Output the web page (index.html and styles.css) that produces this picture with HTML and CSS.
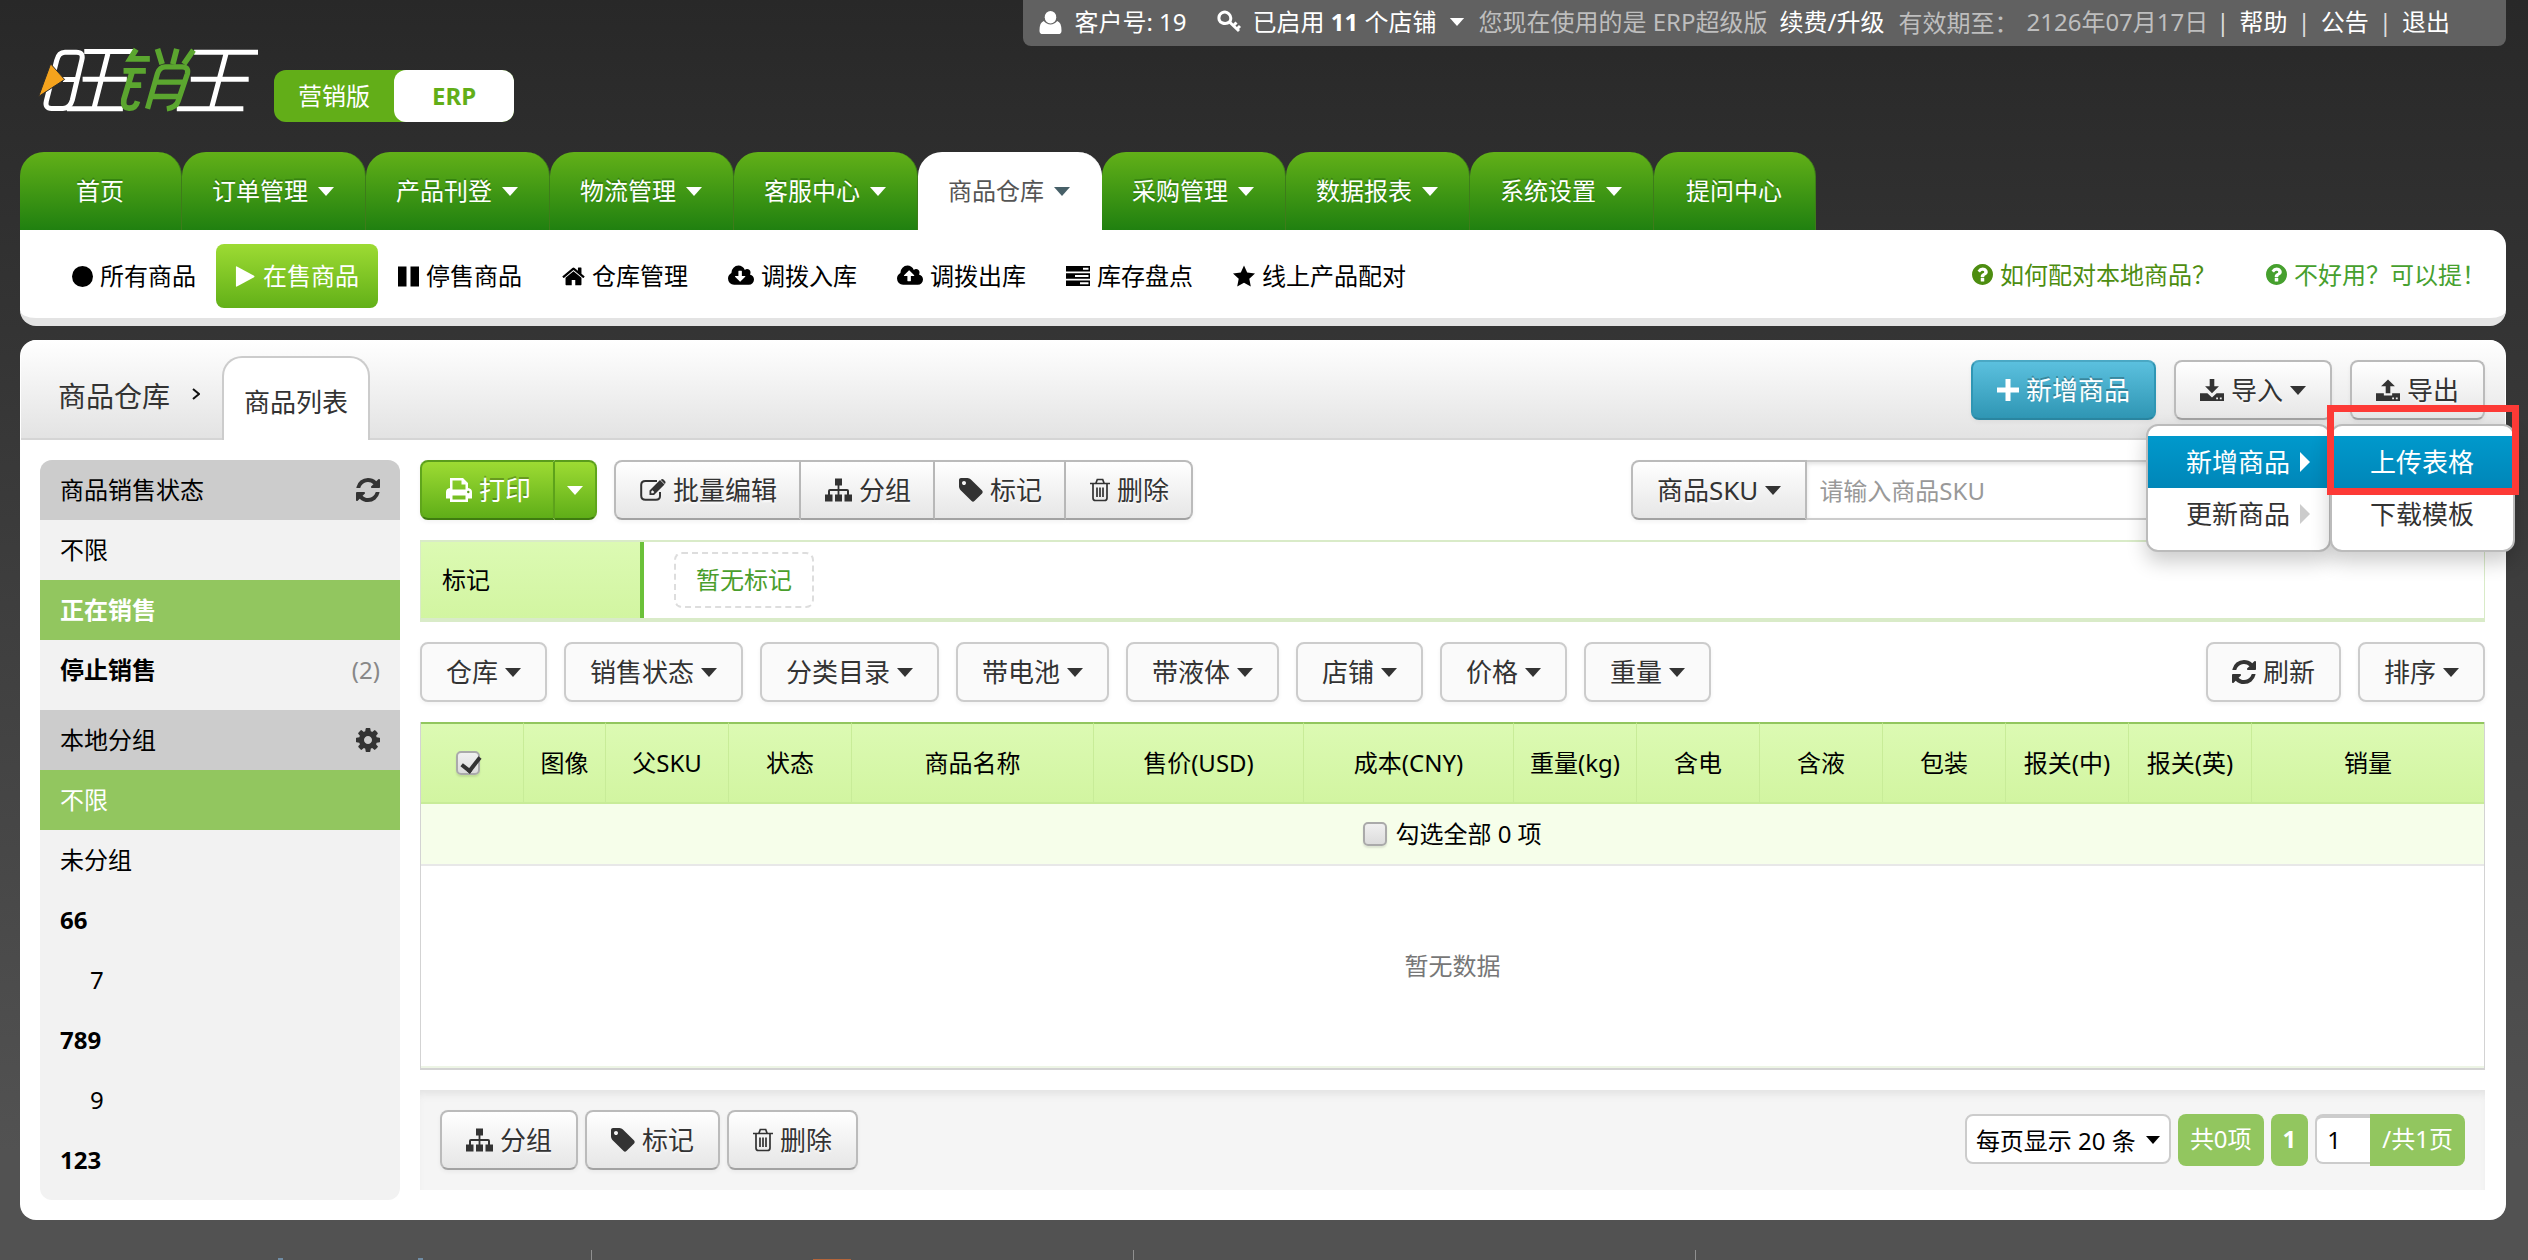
FILE: index.html
```html
<!DOCTYPE html>
<html lang="zh-CN">
<head>
<meta charset="utf-8">
<title>旺销王 - 商品列表</title>
<link rel="stylesheet" href="styles.css">
</head>
<body>
<svg class="sprite" aria-hidden="true">
  <symbol id="user" viewBox="0 0 23 24"><ellipse cx="11.500" cy="6.500" rx="6" ry="6.500"/><path d="M4.500 10.500Q0 12 0 20.500Q0 24 3.500 24H19.500Q23 24 23 20.500Q23 12 18.500 10.500Q15.500 14 11.500 14T4.500 10.500Z"/></symbol>
  <symbol id="key" viewBox="0 0 24 24"><path d="M2.200 10Q1 5 5 2.800T12 4Q15 7 13 11.500Q9.500 14.500 5.500 13Q2.800 12 2.200 10Z" fill="none" stroke="currentColor" stroke-width="3"/><path d="M12 11.500L22 21M16 16L19.500 12.500M19.500 19.500L23 16" fill="none" stroke="currentColor" stroke-width="3"/></symbol>
  <symbol id="caret" viewBox="0 0 16 9"><path d="M0 0H16L8 9Z"/></symbol>
  <symbol id="circle" viewBox="0 0 20 20"><circle cx="10" cy="10" r="10"/></symbol>
  <symbol id="play" viewBox="0 0 20 22"><path d="M0 1Q0 0 1 .5L19 10.300Q20 11 19 11.700L1 21.500Q0 22 0 21Z"/></symbol>
  <symbol id="pause" viewBox="0 0 21 20"><path d="M0 0H8.500V20H0ZM12.500 0H21V20H12.500Z"/></symbol>
  <symbol id="home" viewBox="64 200 1664 1400"><path d="M1472 992v480q0 26-19 45t-45 19h-384v-384h-256v384h-384q-26 0-45-19t-19-45v-480q0-1 .5-3t.5-3l575-474 575 474q1 2 1 6zm223-69l-62 74q-8 9-21 11h-3q-13 0-21-7l-692-577-692 577q-12 8-24 7-13-2-21-11l-62-74q-8-10-7-23.500t11-21.500l719-599q32-26 76-26t76 26l244 204v-195q0-14 9-23t23-9h192q14 0 23 9t9 23v408l219 182q10 8 11 21.500t-7 23.500z"/></symbol>
  <symbol id="cloud-down" viewBox="-64 256 1920 1280"><path fill-rule="evenodd" d="M1216 928q0-14-9-23t-23-9h-224v-352q0-13-9.500-22.500t-22.500-9.500h-192q-13 0-22.500 9.500t-9.500 22.500v352h-224q-13 0-22.500 9.500t-9.500 22.500q0 14 9 23l352 352q9 9 23 9t23-9l351-351q10-12 10-24zM1856 1152q0 159-112.500 271.500t-271.500 112.500h-1088q-185 0-316.500-131.500t-131.500-316.500q0-130 70-240t188-165q-2-30-2-43 0-212 150-362t362-150q156 0 285.500 87t188.500 231q71-62 166-62 106 0 181 75t75 181q0 76-41 138 130 31 213.500 135.500t83.500 238.500z"/></symbol>
  <symbol id="cloud-up" viewBox="-64 256 1920 1280"><path fill-rule="evenodd" d="M1216 864q0-14-9-23l-352-352q-9-9-23-9t-23 9l-351 351q-10 12-10 24 0 14 9 23t23 9h224v352q0 13 9.500 22.500t22.500 9.500h192q13 0 22.500-9.500t9.500-22.500v-352h224q13 0 22.500-9.500t9.500-22.500zM1856 1152q0 159-112.500 271.500t-271.500 112.500h-1088q-185 0-316.500-131.500t-131.500-316.500q0-130 70-240t188-165q-2-30-2-43 0-212 150-362t362-150q156 0 285.500 87t188.500 231q71-62 166-62 106 0 181 75t75 181q0 76-41 138 130 31 213.500 135.500t83.500 238.500z"/></symbol>
  <symbol id="tasks" viewBox="0 0 24 20"><path fill-rule="evenodd" d="M0 0H24V5.500H0ZM17 1.800V3.800H22.500V1.800ZM0 7.200H24V12.700H0ZM9 9V11H22.500V9ZM0 14.500H24V20H0ZM14 16.200V18.200H22.500V16.200Z"/></symbol>
  <symbol id="star" viewBox="0 0 22 21"><path d="M11 0L14.200 7L22 8L16.300 13.300L17.800 21L11 17.200L4.200 21L5.700 13.300L0 8L7.800 7Z"/></symbol>
  <symbol id="question" viewBox="128 128 1536 1536"><path fill-rule="evenodd" d="M1024 1376v-192q0-14-9-23t-23-9h-192q-14 0-23 9t-9 23v192q0 14 9 23t23 9h192q14 0 23-9t9-23zm256-672q0-88-55.500-163t-138.500-116-170-41q-243 0-371 213-15 24 8 42l132 100q7 6 19 6 16 0 25-12 53-68 86-92 34-24 86-24 48 0 85.500 26t37.500 59q0 38-20 61t-68 45q-63 28-115.500 86.500t-52.500 125.500v36q0 14 9 23t23 9h192q14 0 23-9t9-23q0-19 21.500-49.500t54.500-49.500q32-18 49-28.500t46-35 44.500-48 28-60.500 12.500-81zm384 192q0 209-103 385.500t-279.500 279.500-385.500 103-385.500-103-279.500-279.500-103-385.500 103-385.500 279.500-279.500 385.500-103 385.500 103 279.500 279.500 103 385.500z"/></symbol>
  <symbol id="refresh" viewBox="128 128 1536 1536"><path d="M1639 1056q0 5-1 7-64 268-268 434.500t-478 166.500q-146 0-282.500-55t-243.500-157l-129 129q-19 19-45 19t-45-19-19-45v-448q0-26 19-45t45-19h448q26 0 45 19t19 45-19 45l-137 137q71 66 161 102t187 36q134 0 250-65t186-179q11-17 53-117 8-23 30-23h192q13 0 22.500 9.500t9.500 22.500zm25-800v448q0 26-19 45t-45 19h-448q-26 0-45-19t-19-45 19-45l138-138q-148-137-349-137-134 0-250 65t-186 179q-11 17-53 117-8 23-30 23h-199q-13 0-22.500-9.500t-9.500-22.500v-7q65-268 270-434.500t480-166.500q146 0 284 55.500t245 156.500l130-129q19-19 45-19t45 19 19 45z"/></symbol>
  <symbol id="cog" viewBox="128 128 1536 1536"><path fill-rule="evenodd" d="M1152 896q0-106-75-181t-181-75-181 75-75 181 75 181 181 75 181-75 75-181zm512-109v222q0 12-8 23t-20 13l-185 28q-19 54-39 91 35 50 107 138 10 12 10 25t-9 23q-27 37-99 108t-94 71q-12 0-26-9l-138-108q-44 23-91 38-16 136-29 186-7 28-36 28h-222q-14 0-24.500-8.500t-11.500-21.500l-28-184q-49-16-90-37l-141 107q-10 9-25 9-14 0-25-11-126-114-165-168-7-10-7-23 0-12 8-23 15-21 51-66.500t54-70.500q-27-50-41-99l-183-27q-13-2-21-12.500t-8-23.500v-222q0-12 8-23t19-13l186-28q14-46 39-92-40-57-107-138-10-12-10-24 0-10 9-23 26-36 98.500-107.500t94.500-71.500q13 0 26 10l138 107q44-23 91-38 16-136 29-186 7-28 36-28h222q14 0 24.500 8.500t11.500 21.500l28 184q49 16 90 37l142-107q9-9 24-9 13 0 25 10 129 119 165 170 7 8 7 22 0 12-8 23-15 21-51 66.500t-54 70.500q26 50 41 98l183 28q13 2 21 12.500t8 23.500z"/></symbol>
  <symbol id="print" viewBox="0 0 26 24"><path fill-rule="evenodd" d="M4 0H17L22 5V10Q26 10.500 26 14V20.500H22V24H4V20.500H0V14Q0 10.500 4 10ZM6.500 2.500V11.500H19.500V6.500H15.500V2.500ZM6.500 17.500V21.500H19.500V17.500Z"/><circle cx="22.300" cy="14" r="1.200" fill="#5a9d1c"/></symbol>
  <symbol id="edit" viewBox="0 0 26 22"><path d="M17 2H5.500Q1.200 2 1.200 6V16.500Q1.200 20.800 5.500 20.800H16Q20 20.800 20 17V13" fill="none" stroke="currentColor" stroke-width="2"/><path fill-rule="evenodd" d="M20 1L24.500 5.500L14 16H9.500V11.500ZM11.300 12.300V14.200H13.200L14.300 13L12.500 11.200ZM21.500 .2Q22.500 -.3 23.500 .6L25.200 2.300Q26 3.400 25.200 4.400L24.800 4.900L20.900 .9Z"/></symbol>
  <symbol id="sitemap" viewBox="0 0 27 23"><path d="M10 0H17V7H14.400V10.500H22Q24 10.500 24 12.500V16H27V23H19.500V16H22V12.500H14.400V16H17V23H10V16H12.600V12.500H5V16H7.500V23H0V16H3V12.500Q3 10.500 5 10.500H12.600V7H10Z"/></symbol>
  <symbol id="tag" viewBox="128 128 1536 1536"><path fill-rule="evenodd" d="M576 448q0-53-37.500-90.500t-90.500-37.500-90.500 37.500-37.500 90.500 37.500 90.500 90.500 37.500 90.500-37.500 37.500-90.500zm1067 576q0 53-37 90l-491 492q-39 37-91 37-53 0-90-37l-715-716q-38-37-64.500-101t-26.500-117v-416q0-52 38-90t90-38h416q53 0 117 26.500t102 64.500l715 714q37 39 37 91z"/></symbol>
  <symbol id="trash" viewBox="0 0 20 23"><path d="M0 5H20M3 5V19.500Q3 22 5.500 22H14.500Q17 22 17 19.500V5M6 4.500L7.300 1H12.700L14 4.500M7 9V18.500M10 9V18.500M13 9V18.500" fill="none" stroke="currentColor" stroke-width="1.700"/></symbol>
  <symbol id="plus" viewBox="0 0 22 22"><path d="M8.500 0H13.500V8.500H22V13.500H13.500V22H8.500V13.500H0V8.500H8.500Z"/></symbol>
  <symbol id="import" viewBox="0 0 26 24"><path d="M10.500 0H15.500V8H20.500L13 15.500L5.500 8H10.500Z"/><path fill-rule="evenodd" d="M0 15.500H8L13 20L18 15.500H26V24H0ZM17.500 20V22H19.500V20ZM21.500 20V22H23.500V20Z"/></symbol>
  <symbol id="export" viewBox="0 0 26 24"><path d="M10.500 15.500H15.500V8H20.500L13 .5L5.500 8H10.500Z"/><path fill-rule="evenodd" d="M0 15.500H8.500V18H17.500V15.500H26V24H0ZM17.500 20V22H19.500V20ZM21.500 20V22H23.500V20Z"/></symbol>
</svg>

<header class="page-header">
  <div class="topbar">
    <a class="top-user" href="#"><svg class="i23"><use href="#user"/></svg>客户号: 19</a>
    <a class="top-shops" href="#"><svg class="i24"><use href="#key"/></svg><span>已启用 <b>11</b> 个店铺</span><svg class="caret"><use href="#caret"/></svg></a>
    <span class="top-note">您现在使用的是 ERP超级版</span>
    <a class="top-link" href="#">续费/升级</a>
    <span class="top-note expiry"><span>有效期至<span class="punct">：</span></span><span>2126年07月17日</span></span>
    <nav class="top-nav"><a href="#">帮助</a><a href="#">公告</a><a href="#">退出</a></nav>
  </div>
  <div class="brand">
    <svg class="logo" viewBox="20 50 670 200" role="img" aria-label="旺销王">
      <g fill="none" stroke="#fff" stroke-width="15">
        <path d="M104 68H138Q160 68 155 90L126 212Q119 237 98 237H64Q43 237 48 215L79 93Q85 68 104 68Z"/>
        <path d="M98 150H138"/>
        <path d="M162 66H312M157 149H290M110 238H278M233 72L192 234"/>
        <path d="M492 68H684M482 149H656M440 238H640M588 72L545 234"/>
      </g>
      <g fill="none" stroke="#5ba62f" stroke-width="17">
        <path d="M318 59L300 88H359M280 124H347M305 130L281 210Q277 236 296 236Q316 237 322 215M290 167H333"/>
        <path d="M382 58L396 104M440 58L428 104M490 62L461 104"/>
        <path d="M352 238L382 132Q388 112 406 112H456Q476 112 472 132L444 215Q438 234 410 238M372 158H462M360 201H450" stroke-width="16"/>
      </g>
      <path d="M61 103L103 150L25 201Z" fill="#f5a31d" stroke="#2b2b2b" stroke-width="3"/>
    </svg>
    <nav class="edition"><a href="#">营销版</a><a class="on" href="#">ERP</a></nav>
  </div>
  <nav class="tabs">
    <a href="#">首页</a>
    <a href="#">订单管理<svg class="caret"><use href="#caret"/></svg></a>
    <a href="#">产品刊登<svg class="caret"><use href="#caret"/></svg></a>
    <a href="#">物流管理<svg class="caret"><use href="#caret"/></svg></a>
    <a href="#">客服中心<svg class="caret"><use href="#caret"/></svg></a>
    <a class="on" href="#">商品仓库<svg class="caret"><use href="#caret"/></svg></a>
    <a href="#">采购管理<svg class="caret"><use href="#caret"/></svg></a>
    <a href="#">数据报表<svg class="caret"><use href="#caret"/></svg></a>
    <a href="#">系统设置<svg class="caret"><use href="#caret"/></svg></a>
    <a href="#">提问中心</a>
  </nav>
  <div class="subnav">
    <nav>
      <a href="#"><svg class="i21"><use href="#circle"/></svg>所有商品</a>
      <a class="on" href="#"><svg class="i21"><use href="#play"/></svg>在售商品</a>
      <a href="#"><svg class="i21"><use href="#pause"/></svg>停售商品</a>
      <a href="#"><svg class="i23"><use href="#home"/></svg>仓库管理</a>
      <a href="#"><svg class="i26"><use href="#cloud-down"/></svg>调拨入库</a>
      <a href="#"><svg class="i26"><use href="#cloud-up"/></svg>调拨出库</a>
      <a href="#"><svg class="i24"><use href="#tasks"/></svg>库存盘点</a>
      <a href="#"><svg class="i22"><use href="#star"/></svg>线上产品配对</a>
    </nav>
    <div class="help">
      <a href="#"><svg class="i21"><use href="#question"/></svg><span>如何配对本地商品<span class="punct">？</span></span></a>
      <a class="suggest" href="#"><svg class="i21"><use href="#question"/></svg><span>不好用<span class="punct">？</span>可以提<span class="punct">！</span></span></a>
    </div>
  </div>
</header>

<main class="panel">
  <div class="panel-head">
    <a class="crumb" href="#">商品仓库</a>
    <svg class="chevron" viewBox="0 0 8 12"><path d="M1 1L7 6L1 11" fill="none" stroke="#111" stroke-width="2"/></svg>
    <h1 class="page-tab">商品列表</h1>
    <div class="head-actions">
      <button class="btn blue" type="button"><svg class="i22"><use href="#plus"/></svg>新增商品</button>
      <div class="dropdown">
        <button class="btn" type="button"><svg class="i24"><use href="#import"/></svg>导入<svg class="caret"><use href="#caret"/></svg></button>
        <ul class="menu">
          <li class="on"><a href="#">新增商品<i></i></a>
            <ul class="menu submenu">
              <li class="on marked"><a href="#">上传表格</a></li>
              <li><a href="#">下载模板</a></li>
            </ul>
          </li>
          <li><a href="#">更新商品<i></i></a></li>
        </ul>
      </div>
      <button class="btn" type="button"><svg class="i24"><use href="#export"/></svg>导出</button>
    </div>
  </div>

  <div class="columns">
    <aside class="sidebar">
      <h2>商品销售状态<button type="button" aria-label="刷新"><svg class="i24"><use href="#refresh"/></svg></button></h2>
      <ul>
        <li><a href="#">不限</a></li>
        <li class="on"><a href="#"><b>正在销售</b></a></li>
        <li><a href="#"><b>停止销售</b><span>(2)</span></a></li>
      </ul>
      <h2>本地分组<button type="button" aria-label="设置"><svg class="i24"><use href="#cog"/></svg></button></h2>
      <ul>
        <li class="on"><a href="#">不限</a></li>
        <li><a href="#">未分组</a></li>
        <li><a href="#"><b>66</b></a></li>
        <li class="child"><a href="#">7</a></li>
        <li><a href="#"><b>789</b></a></li>
        <li class="child"><a href="#">9</a></li>
        <li><a href="#"><b>123</b></a></li>
      </ul>
    </aside>

    <section class="content">
      <div class="toolbar">
        <div class="group green">
          <button class="btn" type="button"><svg class="i26"><use href="#print"/></svg>打印</button>
          <button class="btn split" type="button" aria-label="更多打印"><svg class="caret"><use href="#caret"/></svg></button>
        </div>
        <div class="group">
          <button class="btn" type="button"><svg class="i26"><use href="#edit"/></svg>批量编辑</button>
          <button class="btn" type="button"><svg class="i27"><use href="#sitemap"/></svg>分组</button>
          <button class="btn" type="button"><svg class="i24"><use href="#tag"/></svg>标记</button>
          <button class="btn" type="button"><svg class="i20"><use href="#trash"/></svg>删除</button>
        </div>
        <div class="search">
          <button class="btn" type="button">商品SKU<svg class="caret"><use href="#caret"/></svg></button>
          <input type="text" aria-label="商品SKU" placeholder="请输入商品SKU">
        </div>
      </div>

      <div class="marks">
        <h3>标记</h3>
        <div><a href="#">暂无标记</a></div>
      </div>

      <div class="filters">
        <button class="btn flat" type="button">仓库<svg class="caret"><use href="#caret"/></svg></button>
        <button class="btn flat" type="button">销售状态<svg class="caret"><use href="#caret"/></svg></button>
        <button class="btn flat" type="button">分类目录<svg class="caret"><use href="#caret"/></svg></button>
        <button class="btn flat" type="button">带电池<svg class="caret"><use href="#caret"/></svg></button>
        <button class="btn flat" type="button">带液体<svg class="caret"><use href="#caret"/></svg></button>
        <button class="btn flat" type="button">店铺<svg class="caret"><use href="#caret"/></svg></button>
        <button class="btn flat" type="button">价格<svg class="caret"><use href="#caret"/></svg></button>
        <button class="btn flat" type="button">重量<svg class="caret"><use href="#caret"/></svg></button>
        <button class="btn flat push" type="button"><svg class="i24"><use href="#refresh"/></svg>刷新</button>
        <button class="btn flat" type="button">排序<svg class="caret"><use href="#caret"/></svg></button>
      </div>

      <table class="goods">
        <colgroup>
          <col class="c-check"><col class="c-img"><col class="c-std"><col class="c-std"><col class="c-name"><col class="c-price"><col class="c-price"><col class="c-std"><col class="c-std"><col class="c-std"><col class="c-std"><col class="c-std"><col class="c-std"><col>
        </colgroup>
        <thead>
          <tr>
            <th class="check"><input type="checkbox" checked aria-label="全选"></th><th>图像</th><th>父SKU</th><th>状态</th><th>商品名称</th><th>售价(USD)</th><th>成本(CNY)</th><th>重量(kg)</th><th>含电</th><th>含液</th><th>包装</th><th>报关(中)</th><th>报关(英)</th><th>销量</th>
          </tr>
        </thead>
        <tbody>
          <tr class="pick"><td colspan="14"><label><input type="checkbox">勾选全部 0 项</label></td></tr>
          <tr class="empty"><td colspan="14">暂无数据</td></tr>
        </tbody>
      </table>

      <div class="bottom-bar">
        <button class="btn" type="button"><svg class="i27"><use href="#sitemap"/></svg>分组</button>
        <button class="btn" type="button"><svg class="i24"><use href="#tag"/></svg>标记</button>
        <button class="btn" type="button"><svg class="i20"><use href="#trash"/></svg>删除</button>
        <div class="pager">
          <div class="select"><select aria-label="每页显示"><option>每页显示 20 条</option></select><svg class="caret"><use href="#caret"/></svg></div>
          <span class="pill">共0项</span>
          <a class="pill" href="#"><b>1</b></a>
          <label class="goto"><input type="text" value="1" aria-label="页码"><span>/共1页</span></label>
        </div>
      </div>
    </section>
  </div>
</main>

<footer class="footer">
  <div><svg viewBox="0 0 145 2"><path d="M0 0H5V2H0ZM140 0H145V2H140Z" fill="#6f8ba3"/></svg></div>
  <div><svg viewBox="0 0 145 2"><path d="M58 1H96V2H58Z" fill="#b5653a"/></svg></div>
  <div></div>
  <div></div>
</footer>
</body>
</html>
```
FILE: styles.css
```css
* { box-sizing: border-box; }

body {
  margin: 0;
  min-height: 100vh;
  display: flex;
  flex-direction: column;
  padding: 0 22px 0 20px;
  font: 24px/36px "Noto Sans", "Noto Sans CJK SC", sans-serif;
  color: #000;
  background: linear-gradient(#282828, #343434 330px, #525252 1150px) #525252;
}

a { color: inherit; text-decoration: none; }
ul { list-style: none; margin: 0; padding: 0; }
h1, h2, h3 { margin: 0; font-weight: 400; font-size: inherit; }
button, input, select { font: inherit; color: inherit; margin: 0; }
svg { fill: currentColor; flex: none; display: block; }

/* Question marks and colons sit in the middle of their square */
.punct { font-family: "Noto Sans CJK TC", sans-serif; }

.sprite { position: absolute; width: 0; height: 0; }
.i20 { width: 20px; height: 24px; }
.i21 { width: 21px; height: 21px; }
.i22 { width: 22px; height: 22px; }
.i23 { width: 23px; height: 23px; }
.i24 { width: 24px; height: 24px; }
.i26 { width: 26px; height: 24px; }
.i27 { width: 27px; height: 24px; }
.caret { width: 16px; height: 9px; }

/* Header */
.page-header { display: flex; flex-direction: column; }

.topbar {
  align-self: flex-end;
  height: 46px;
  padding: 0 56px 2px 16px;
  display: flex;
  align-items: center;
  white-space: nowrap;
  color: #fff;
  background: #616161;
  border-radius: 0 0 8px 8px;
}
.top-user, .top-shops { display: flex; align-items: center; gap: 12px; }
.top-user { margin-right: 30px; }
.top-shops .caret { height: 8px; }
.top-note { margin: 0 12px 0 14px; color: #bebebe; }
.expiry { display: flex; gap: 8px; margin-right: 8px; }
.top-nav { display: flex; }
.top-nav a { display: flex; }
.top-nav a::before { content: "|"; margin-right: 10px; color: #ddd; }
.top-nav a + a { margin-left: 10px; }

.brand {
  height: 106px;
  padding-left: 17px;
  display: flex;
  align-items: flex-start;
}
.logo { width: 223px; height: 67px; margin-right: 14px; }
.edition {
  display: flex;
  margin-top: 24px;
  border-radius: 12px;
  background: #62ae18;
  color: #fff;
}
.edition a { width: 120px; line-height: 52px; text-align: center; }
.edition .on {
  border-radius: 12px;
  background: #fff;
  color: #62ae18;
  font-weight: 700;
}

.tabs { display: flex; }
.tabs a {
  min-width: 162px;
  height: 78px;
  padding: 0 31px 0 30px;
  display: flex;
  align-items: center;
  justify-content: center;
  gap: 10px;
  color: #fff;
  text-shadow: 0 -2px 0 rgba(0, 60, 0, .3);
  background: linear-gradient(#62b018, #208010);
  border-right: 1px solid #3e7c1a;
  border-radius: 24px 24px 0 0;
}
.tabs .on { background: #fff; color: #555; text-shadow: none; border-color: #fff; }
.tabs .on .caret { color: #476068; }

.subnav {
  height: 96px;
  padding: 0 20px 0 32px;
  display: flex;
  align-items: center;
  justify-content: space-between;
  background: #fff;
  border-bottom: 8px solid #e3e3e3;
  border-radius: 0 16px 16px 16px;
}
.subnav a { display: flex; align-items: center; gap: 7px; }
.subnav nav { display: flex; padding-top: 4px; }
.subnav nav a { height: 64px; padding: 0 20px; }
.subnav nav .on {
  padding: 0 19px;
  color: #fff;
  border-radius: 8px;
  background: linear-gradient(#9ddb33, #62b018);
}
.help { display: flex; gap: 50px; color: #4d8d10; }
.help .suggest { color: #46a02e; }

/* Panel */
.panel {
  margin-top: 14px;
  padding: 0 1px 20px;
  background: #fff;
  border-radius: 16px;
}
.panel-head {
  height: 100px;
  padding: 0 20px 0 37px;
  display: flex;
  align-items: flex-end;
  border-bottom: 2px solid #d5d5d5;
  border-radius: 16px 16px 0 0;
  background: linear-gradient(#fff, #e3e3e3);
}
.crumb { font-size: 28px; line-height: 84px; color: #333; }
.chevron { width: 8px; height: 14px; margin: 0 22px 37px; }
.page-tab {
  height: 84px;
  margin-bottom: -2px;
  padding: 0 20px;
  font-size: 26px;
  line-height: 88px;
  color: #333;
  background: #fff;
  border: 2px solid #ccc;
  border-bottom: 0;
  border-radius: 20px 20px 0 0;
}
.head-actions { display: flex; gap: 18px; margin: 0 0 18px auto; }

.btn {
  height: 60px;
  padding: 0 24px;
  display: flex;
  align-items: center;
  gap: 7px;
  font-size: 26px;
  white-space: nowrap;
  color: #333;
  text-shadow: 0 2px 2px rgba(255, 255, 255, .75);
  background: linear-gradient(#fff, #e6e6e6);
  border: 2px solid #bbb;
  border-bottom-color: #a2a2a2;
  border-radius: 8px;
  box-shadow: 0 2px 4px rgba(0, 0, 0, .05);
}
.btn.blue {
  color: #fff;
  text-shadow: 0 -2px 0 rgba(0, 0, 0, .25);
  background: linear-gradient(#5bc0de, #2f96b4);
  border-color: #4aa8c4 #2f96b4 #2a85a0;
}
.btn.flat {
  background: #fafafa;
  border-color: #ccc;
}

.group { display: flex; }
.group .btn { border-radius: 0; padding-right: 22px; }
.group .btn + .btn { border-left-width: 0; }
.group .btn:first-child { border-radius: 8px 0 0 8px; }
.group .btn:last-child { border-radius: 0 8px 8px 0; }
.green .btn {
  color: #fff;
  text-shadow: 0 -2px 0 rgba(0, 0, 0, .25);
  background: linear-gradient(#9ddb33, #5fae18);
  border-color: #5a9d1c #5fa51c #3f7c10;
}
.green .btn.split { padding: 0 12px; }

.dropdown { position: relative; }
.menu {
  position: absolute;
  z-index: 2;
  top: 64px;
  right: 1px;
  width: 185px;
  padding: 10px 0;
  background: #fff;
  border: 2px solid #bbb;
  border-radius: 12px;
  box-shadow: 0 10px 20px rgba(0, 0, 0, .2);
}
.menu a {
  height: 52px;
  padding-left: 38px;
  display: flex;
  align-items: center;
  gap: 10px;
  font-size: 26px;
  color: #333;
  white-space: nowrap;
}
.menu .on > a { color: #fff; background: linear-gradient(#09c, #0086b8); }
.menu i {
  border: 10px solid transparent;
  border-left-color: #ccc;
  border-right-width: 0;
}
.menu .on i { border-left-color: #fff; }
.submenu { top: -2px; right: auto; left: 182px; }
.marked { position: relative; }
.marked::after {
  content: "";
  position: absolute;
  inset: -31px -6px -7px -5px;
  border: 7px solid #fd3a36;
}

/* Columns */
.columns { display: flex; gap: 20px; padding: 20px 20px 0 19px; }

.sidebar {
  flex: none;
  width: 360px;
  padding-bottom: 10px;
  display: flex;
  flex-direction: column;
  gap: 10px;
  background: #f2f2f2;
  border-radius: 12px;
}
.sidebar h2 {
  height: 60px;
  padding: 0 20px;
  display: flex;
  align-items: center;
  justify-content: space-between;
  background: #ccc;
}
.sidebar h2:first-child { border-radius: 12px 12px 0 0; }
.sidebar h2 + ul { margin-top: -10px; }
.sidebar button { padding: 0; border: 0; background: none; color: #333; }
.sidebar a {
  height: 60px;
  padding: 0 20px;
  display: flex;
  align-items: center;
  justify-content: space-between;
}
.sidebar .child a { padding-left: 50px; }
.sidebar .on { background: #92c65f; color: #fff; }
.sidebar span { color: #888; }

.content { flex: 1; min-width: 0; display: flex; flex-direction: column; gap: 20px; }
.toolbar { display: flex; gap: 17px; }
.search { flex: 0 0 854px; margin-left: auto; display: flex; }
.search .btn { border-radius: 8px 0 0 8px; }
.search input {
  flex: 1;
  min-width: 0;
  height: 60px;
  padding: 0 12px;
  border: 2px solid #ccc;
  border-left: 0;
  border-radius: 0 8px 8px 0;
  outline: 0;
  box-shadow: inset 0 2px 4px rgba(0, 0, 0, .12);
}
.search input::placeholder { color: #999; }

.marks {
  display: flex;
  border: 1px solid #d9ebc8;
  border-width: 2px 1px 4px;
}
.marks h3 {
  width: 223px;
  padding-left: 21px;
  line-height: 76px;
  background: linear-gradient(#dcfab3, #d2f5a1);
  border-right: 4px solid #6bc139;
}
.marks div { padding: 10px 30px; }
.marks a {
  display: block;
  padding: 0 20px;
  line-height: 52px;
  color: #4a9e2c;
  border: 2px dashed #ddd;
  border-radius: 8px;
}

.filters { display: flex; gap: 17px; }
.push { margin-left: auto; }

.goods {
  width: 100%;
  table-layout: fixed;
  border-collapse: separate;
  border-spacing: 0;
  border: 1px solid #d3d3d3;
  border-width: 0 1px 2px;
}
.c-check { width: 103px; }
.c-img { width: 82px; }
.c-std { width: 123px; }
.c-name { width: 242px; }
.c-price { width: 210px; }
.goods th {
  height: 82px;
  padding: 0;
  font-weight: 400;
  white-space: nowrap;
  background: linear-gradient(#dcfab3, #d2f5a1);
  border: 0 solid #c8ec98;
  border-right-width: 1px;
  border-top: 2px solid #92c65f;
  border-bottom-width: 2px;
}
.goods .check { padding-right: 8px; }
.goods th:last-child { border-right: 0; }
.goods td { padding: 0; text-align: center; }
.goods input {
  appearance: none;
  position: relative;
  display: block;
  width: 24px;
  height: 24px;
  margin: 0 auto;
  border: 2px solid #aaa;
  border-radius: 5px;
  background: linear-gradient(#f0f0f0, #dcdcdc);
  box-shadow: 0 2px 2px rgba(0, 0, 0, .1);
}
.goods input:checked::after {
  content: "";
  position: absolute;
  left: 7px;
  top: 0;
  width: 8px;
  height: 15px;
  border: solid #333;
  border-width: 0 4px 4px 0;
  transform: rotate(38deg);
}
.goods label { display: flex; align-items: center; justify-content: center; gap: 8px; }
.goods label input { margin: 0; }
.pick td { height: 62px; background: #f6feea; border-bottom: 2px solid #e8e8e8; }
.empty td { height: 202px; color: #777; border-bottom: 2px solid #edf5e5; }

.bottom-bar {
  height: 100px;
  padding: 0 20px;
  display: flex;
  align-items: center;
  gap: 7px;
  background: #f5f5f5;
  box-shadow: inset 0 8px 8px -4px #e2e2e2;
}
.pager { display: flex; gap: 7px; margin-left: auto; line-height: 50px; }
.select { position: relative; }
.select select {
  appearance: none;
  width: 206px;
  height: 50px;
  padding: 0 30px 0 9px;
  background: #fff;
  border: 2px solid #ccc;
  border-radius: 8px;
}
.select .caret { position: absolute; right: 11px; top: 22px; width: 14px; height: 8px; pointer-events: none; }
.pill, .goto span {
  padding: 0 12px;
  color: #fff;
  background: #92c65f;
  border-radius: 8px;
}
.goto { display: flex; }
.goto input {
  width: 55px;
  height: 50px;
  padding: 0 10px;
  background: #fff;
  border: 2px solid #ccc;
  border-top-width: 4px;
  border-right: 0;
  border-radius: 8px 0 0 8px;
}
.goto span { border-radius: 0 8px 8px 0; }

/* Footer */
.footer {
  flex: 1;
  min-height: 10px;
  margin: 30px -22px 0 -20px;
  display: grid;
  grid-template-columns: 591fr 542fr 562fr 833fr;
}
.footer div { display: flex; align-items: flex-end; padding-left: 30%; }
.footer div:first-child { padding-left: 278px; }
.footer div + div { border-left: 1px solid #909090; }
.footer svg { width: 145px; height: 2px; }
```
